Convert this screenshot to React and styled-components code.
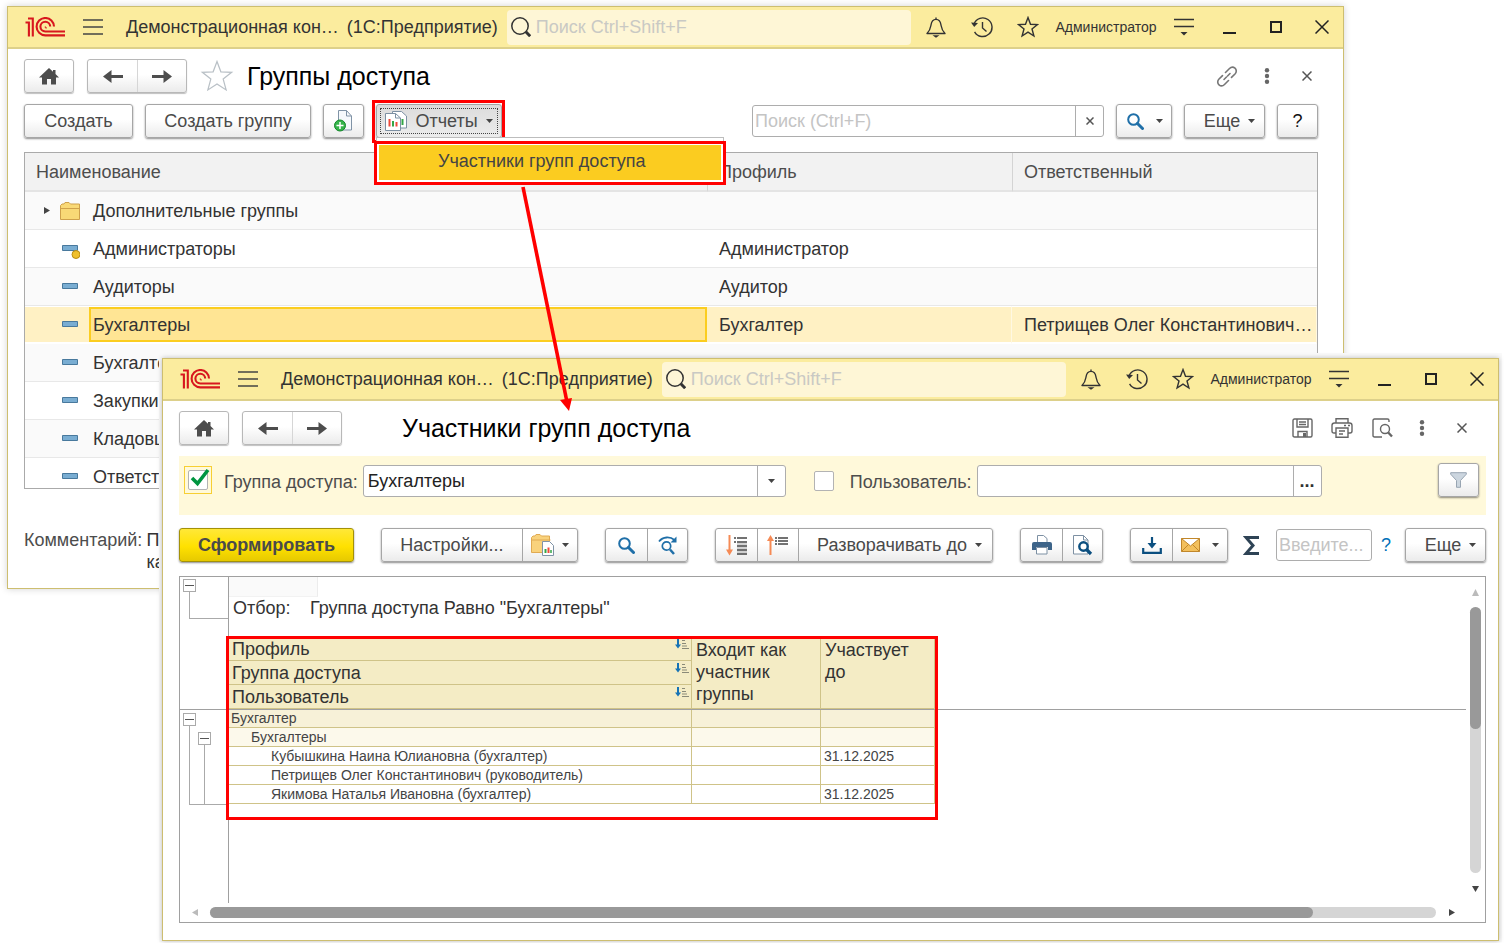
import React, { useState } from 'react'
import styled, { createGlobalStyle, css } from 'styled-components'

const GlobalStyle = createGlobalStyle`
  * {
    box-sizing: border-box;
  }
  body {
    margin: 0;
    background: #fff;
    color: #333;
    font-family: 'Liberation Sans', Arial, sans-serif;
    font-size: 18px;
    line-height: 22px;
  }
  button, input, select {
    margin: 0;
    padding: 0;
    font: inherit;
    color: inherit;
  }
  svg {
    display: block;
    flex: none;
  }
`

/* ---------- desktop and windows ---------- */

const Desktop = styled.div`
  position: relative;
  height: 100vh;
  overflow: hidden;
`

const Window = styled.section`
  position: absolute;
  display: flex;
  flex-direction: column;
  background: #fff;
  border: 1px solid #cdbe70;
  overflow: visible;
`

const ListWindow = styled(Window)`
  inset: 6px 160px 354px 7px;
  box-shadow: 0 0 7px rgba(0, 0, 0, 0.18);
`

const ReportWindow = styled(Window)`
  inset: 358px 5px 2px 162px;
  box-shadow: 0 0 5px rgba(0, 0, 0, 0.25), 0 -2px 0 3px #fafafa;
`

const TitleBar = styled.header`
  display: flex;
  align-items: center;
  height: 42px;
  padding-left: 17px;
  background: #fbec9e;
  border-bottom: 2px solid #ddd08a;
  flex: none;
`

const AppName = styled.span`
  margin-left: 8px;
  white-space: nowrap;
`

const MenuButton = styled.button`
  margin: 0 15px 0 18px;
  border: none;
  background: none;
`

const GlobalSearch = styled.label`
  display: flex;
  flex: 1;
  align-items: center;
  gap: 5px;
  height: 35px;
  min-width: 0;
  margin: 0 4px 0 9px;
  padding-left: 4px;
  border-radius: 4px;
  background: #fef6d6;

  input {
    flex: 1;
    min-width: 0;
    border: none;
    background: none;
    outline: none;
  }
  input::placeholder {
    color: #c9c9c4;
    opacity: 1;
  }
`

const TitleActions = styled.div`
  display: flex;
  align-items: center;
  gap: 4px;
`

const TitleButton = styled.button`
  display: flex;
  align-items: center;
  justify-content: center;
  width: 42px;
  height: 38px;
  border: none;
  background: none;
`

const UserButton = styled(TitleButton)`
  width: 106px;
  font-size: 14px;
`

/* ---------- controls ---------- */

const raised = css`
  border: 1px solid #a6a6a6;
  background: linear-gradient(#fff 45%, #ebebeb);
  box-shadow: 0 1px 2px rgba(0, 0, 0, 0.45);
`

const Button = styled.button`
  display: flex;
  align-items: center;
  justify-content: center;
  gap: ${(p) => p.$gap || 8}px;
  width: ${(p) => p.$width}px;
  height: 34px;
  padding-left: ${(p) => p.$indent || 0}px;
  flex: none;
  white-space: nowrap;
  border-radius: 3px;
  color: #4a4a4a;
  ${raised}
`

const HelpButton = styled(Button)`
  color: #111;
`

const PressedButton = styled(Button)`
  background: linear-gradient(#dcdcdc, #ececec);
  outline: 1px dotted #444;
  outline-offset: -5px;
`

const PrimaryButton = styled(Button)`
  font-weight: bold;
  border-color: #a39108;
  background: linear-gradient(#ffe838, #ffe100 55%, #e6c900);
`

const ButtonGroup = styled.div`
  display: flex;
  flex: none;
  border-radius: 3px;
  ${raised}

  ${Button} {
    height: 32px;
    border: none;
    background: none;
    box-shadow: none;
  }
  ${Button} + ${Button} {
    border-left: 1px solid #a6a6a6;
    border-radius: 0;
  }
`

const NavRow = styled.div`
  display: flex;
  align-items: center;
  height: 34px;
  margin-top: 10px;
  flex: none;
`

const NavGroup = styled(ButtonGroup)`
  margin-left: 13px;
  box-shadow: 0 1px 1px rgba(0, 0, 0, 0.25);
  border-color: #b8b8b8;

  ${Button} + ${Button} {
    border-left-color: #d6d6d6;
  }
`

const HomeButton = styled(Button)`
  border-color: #b8b8b8;
  box-shadow: 0 1px 1px rgba(0, 0, 0, 0.25);
`

const FavoriteSlot = styled.div`
  display: flex;
  align-items: center;
  justify-content: center;
  width: 60px;

  button {
    border: none;
    background: none;
  }
`

const PageTitle = styled.h1`
  flex: 1;
  margin: 0;
  color: #000;
  font-size: 25px;
  font-weight: normal;
  line-height: 30px;
  white-space: nowrap;
`

const PageActions = styled.div`
  display: flex;
  margin-right: ${(p) => p.$after}px;

  button {
    display: flex;
    align-items: center;
    justify-content: center;
    width: 40px;
    height: 34px;
    border: none;
    background: none;
  }
`

const Toolbar = styled.div`
  display: flex;
  align-items: center;
  gap: 12px;
  margin-top: 11px;
  flex: none;
`

const Spacer = styled.div`
  flex: 1;
`

const Field = styled.div`
  position: relative;
  display: flex;
  width: ${(p) => p.$width}px;
  height: 32px;
  border: 1px solid #adadad;
  border-radius: 3px;
  background: #fff;
  overflow: hidden;

  input, select {
    flex: 1;
    min-width: 0;
    padding: 0 4px 0 2px;
    border: none;
    outline: none;
    background: none;
    appearance: none;
  }
  select {
    padding-left: 4px;
    color: #222;
  }
  input::placeholder {
    color: #c4c4c4;
    opacity: 1;
  }
`

const FieldButton = styled.button`
  display: flex;
  align-items: center;
  justify-content: center;
  width: 28px;
  border: none;
  border-left: 1px solid #adadad;
  background: none;
  font-weight: bold;
`

const DropMark = styled.span`
  position: absolute;
  right: 0;
  top: 0;
  bottom: 0;
  display: flex;
  align-items: center;
  justify-content: center;
  width: 28px;
  border-left: 1px solid #adadad;
  pointer-events: none;
`

/* ---------- reports menu ---------- */

const ReportsMenu = styled.div`
  position: relative;

  &::after {
    content: '';
    position: absolute;
    z-index: 2;
    inset: -4px -3px -5px -4px;
    border: 3px solid #f00;
    pointer-events: none;
  }
`

const Popup = styled.div`
  position: absolute;
  z-index: 3;
  top: 33px;
  left: 0;
  width: 348px;
  padding: 7px 2px 2px;
  border: 1px solid #bdbdbd;
  background: #fff;

  &::after {
    content: '';
    position: absolute;
    inset: 3px -3px -3px;
    border: 3px solid #f00;
    pointer-events: none;
  }
`

const PopupItem = styled.button`
  display: block;
  width: 100%;
  height: 35px;
  padding: 0 0 4px 59px;
  border: none;
  background: #fbcc20;
  color: #444;
  text-align: left;
`

/* ---------- list window ---------- */

const ListBody = styled.div`
  display: flex;
  flex: 1;
  flex-direction: column;
  min-height: 0;
  padding: 0 25px 15px 16px;
`

const TableBox = styled.div`
  flex: 1;
  min-height: 0;
  margin-top: 14px;
  border: 1px solid #aaa;
  overflow: hidden;
`

const GroupTable = styled.table`
  width: 100%;
  border-collapse: separate;
  border-spacing: 0;
  table-layout: fixed;

  th {
    height: 39px;
    padding: 0 11px;
    border-bottom: 2px solid #e4e4e4;
    background: #f2f2f2;
    color: #4d4d4d;
    font-weight: normal;
    text-align: left;
  }
  th + th {
    border-left: 1px solid #d4d4d4;
  }
`

const GroupRow = styled.tr`
  td {
    height: 38px;
    padding: 0 0 0 12px;
    border-bottom: 1px solid #e8e8e8;
    background: ${(p) => (p.$striped ? '#fafafa' : '#fff')};
    white-space: nowrap;
  }
  td:first-child {
    padding: 0;
  }
  ${(p) =>
    p.$selected &&
    css`
      td {
        background: #fff1c4;
        border-top: 1px solid #fff;
        border-bottom: 2px solid #fff;
      }
      td + td {
        border-right: 1px solid #fff8e2;
      }
    `}
`

const NameCell = styled.div`
  display: flex;
  align-items: center;
  height: 35px;
  padding-left: 18px;
`

const NodeIcon = styled.span`
  display: flex;
  align-items: center;
  width: 20px;
  height: 20px;
  margin-left: ${(p) => (p.$expandable ? 10 : 17)}px;
`

const NodeName = styled.span`
  display: flex;
  flex: 1;
  align-items: center;
  height: 35px;
  margin-left: 9px;
  padding-left: 2px;
  border: 2px solid ${(p) => (p.$selected ? '#fbcd20' : 'transparent')};
  background: ${(p) => (p.$selected ? '#ffe594' : 'none')};
`

const Comment = styled.dl`
  display: flex;
  gap: 4px;
  margin: 40px 0 0;
  height: 44px;
  flex: none;

  dt {
    color: #4d4d4d;
  }
  dd {
    margin: 0;
    white-space: pre-line;
  }
`

/* ---------- report window ---------- */

const ReportBody = styled.div`
  display: flex;
  flex: 1;
  flex-direction: column;
  min-height: 0;
  padding: 0 12px 17px 16px;
`

const FilterPanel = styled.div`
  display: flex;
  align-items: flex-start;
  height: 59px;
  margin-top: 11px;
  padding: 9px 7px 0 5px;
  background: #fff9da;
  flex: none;

  label {
    margin: 0 5px 0 12px;
    padding-top: 6px;
    color: #4d4d4d;
    white-space: nowrap;
  }
  ${Button} {
    margin: -2px 0 0 auto;
  }
`

const CheckFrame = styled.span`
  position: relative;
  display: flex;
  padding: 3px;
  margin-top: ${(p) => (p.$focused ? 1 : 2)}px;
  margin-left: ${(p) => p.$indent || 0}px;
  border: 1px solid ${(p) => (p.$focused ? '#f7cf33' : 'transparent')};

  input {
    width: 20px;
    height: 20px;
    border: 1px solid #b3b3b3;
    border-radius: 2px;
    background: #fff;
    appearance: none;
  }
  svg {
    position: absolute;
    left: 5px;
    top: 1px;
    pointer-events: none;
  }
`

const ReportToolbar = styled(Toolbar)`
  gap: 27px;
  margin-top: 13px;
`

const TotalsGroup = styled.div`
  display: flex;
  flex: 1;
  align-items: center;
  gap: 9px;
  margin: 0 -14px 0 -12px;
`

const PlainButton = styled.button`
  border: none;
  background: none;
  color: #0070b8;
  margin-right: ${(p) => p.$after || 0}px;
`

const ReportArea = styled.div`
  display: grid;
  flex: 1;
  grid-template-columns: minmax(0, 1fr) 19px;
  grid-template-rows: minmax(0, 1fr) 19px;
  min-height: 0;
  margin-top: 14px;
  border: 1px solid #a0a0a0;
`

const Canvas = styled.div`
  position: relative;
  display: flex;
  min-height: 0;
`

const FreezeLine = styled.div`
  position: absolute;
  top: 132px;
  left: 0;
  right: 0;
  height: 1px;
  background: #a0a0a0;
`

const Gutter = styled.div`
  width: 49px;
  padding: 2px 0 0 3px;
  border-right: 1px solid #a0a0a0;
  flex: none;
`

const GutterPane = styled.div`
  height: 134px;
`

const OutlineToggle = styled.button`
  display: flex;
  align-items: center;
  justify-content: center;
  width: 13px;
  height: 13px;
  border: 1px solid #aaa;
  background: #fff;

  &::before {
    content: '';
    width: 9px;
    height: 1px;
    background: #555;
  }
`

const OutlineLine = styled.div`
  height: ${(p) => p.$height}px;
  margin-left: 6px;
  padding: ${(p) => p.$inset || '0'};
  border-left: 1px solid #aaa;
  border-bottom: ${(p) => (p.$open ? 'none' : '1px solid #aaa')};
`

const Sheet = styled.div`
  flex: 1;
  min-width: 0;
`

const CurrentCell = styled.div`
  width: 89px;
  height: 20px;
  border-right: 1px solid #ececec;
  border-bottom: 1px solid #f2f2f2;
  background: #fafafa;
`

const Selection = styled.div`
  display: grid;
  grid-template-columns: 77px 1fr;
  padding: 0 0 18px 4px;
`

const ReportFrame = styled.div`
  position: relative;
  width: 706px;

  &::after {
    content: '';
    position: absolute;
    z-index: 1;
    inset: -1px -3px -16px -3px;
    border: 3px solid #f00;
    pointer-events: none;
  }
`

const ReportTable = styled.table`
  width: 100%;
  border-collapse: separate;
  border-spacing: 0;
  table-layout: fixed;
  line-height: 17px;

  th, td {
    padding: 1px 3px 0;
    border-right: 1px solid #cfc388;
    border-bottom: 1px solid #cfc388;
    text-align: left;
    white-space: nowrap;
  }
  th {
    height: 24px;
    padding: 2px 3px 0;
    background: #f4ecc5;
    font-weight: normal;
    line-height: 21px;
  }
  th[rowspan] {
    padding-left: 4px;
    white-space: normal;
    vertical-align: top;
    line-height: 22px;
  }
`

const HeadLabel = styled.div`
  display: flex;
  align-items: flex-start;
  justify-content: space-between;
  margin-right: -2px;
`

const levelColors = ['#f7f1d8', '#fcf9eb', '#fff']

const ReportRow = styled.tr`
  td {
    height: 19px;
    background: ${(p) => levelColors[p.$level]};
    color: #444;
    font-size: 14px;
  }
  td:first-child {
    padding-left: ${(p) => 2 + p.$level * 20}px;
  }
`

const ScrollBar = styled.div`
  display: flex;
  flex-direction: ${(p) => (p.$vertical ? 'column' : 'row')};
  align-items: center;
`

const ScrollArrow = styled.button`
  display: flex;
  align-items: center;
  justify-content: center;
  width: ${(p) => (p.$vertical ? 19 : 30)}px;
  height: ${(p) => (p.$vertical ? 30 : 19)}px;
  border: none;
  background: none;
  flex: none;
`

const ScrollTrack = styled.div`
  flex: 1;
  width: ${(p) => (p.$vertical ? '11px' : 'auto')};
  height: ${(p) => (p.$vertical ? 'auto' : '11px')};
  border-radius: 6px;
  background: #d5d5d5;
`

const ScrollThumb = styled.div`
  width: ${(p) => (p.$vertical ? '100%' : '90%')};
  height: ${(p) => (p.$vertical ? '46%' : '100%')};
  border-radius: 6px;
  background: #999;
`

const Pointer = styled.svg`
  position: absolute;
  left: 516px;
  top: 184px;
  pointer-events: none;
`

/* ---------- icons ---------- */

const Logo = () => (
  <svg width="40" height="20" viewBox="0 0 40 20" fill="none" stroke="#d8171e" strokeWidth="2.1">
    <path d="M0.5 5.500h3.400V19.500M3 1.500h4.800V19.500" />
    <path d="M29 9.600a8.700 8.700 0 1 0-8.700 8.800H40" />
    <path d="M25.200 9.600a4.900 4.900 0 1 0-4.900 4.900H40" />
    <path d="M20.300 9.400v1.500h1.600" strokeWidth="1" />
  </svg>
)

const Lines = () => (
  <svg width="20" height="16" viewBox="0 0 20 16" stroke="#444" strokeWidth="1.4">
    <path d="M0 1h20M0 8h20M0 15h20" />
  </svg>
)

const SearchIcon = () => (
  <svg width="20" height="20" viewBox="0 0 20 20" fill="none" stroke="#333">
    <circle cx="9" cy="9" r="8.2" strokeWidth="1.5" />
    <path d="M14.8 14.8l4.4 4.4" strokeWidth="3" />
  </svg>
)

const BellIcon = () => (
  <svg width="20" height="21" viewBox="0 0 20 21" fill="none" stroke="#333" strokeWidth="1.4" strokeLinejoin="round">
    <path d="M10 0.6v1.600M1 16.500c3.200-3 3.400-5 4-8.500C5.500 4.700 7 2.400 10 2.400s4.500 2.300 5 5.600c.6 3.500.8 5.500 4 8.500z" />
    <path d="M6.500 18.300h7L10 20.800z" fill="#333" stroke="none" />
  </svg>
)

const HistoryIcon = () => (
  <svg width="22" height="21" viewBox="0 0 22 21" fill="none" stroke="#333" strokeWidth="1.4">
    <path d="M3 7A9.300 9.300 0 1 1 3.600 14.800" />
    <path d="M11.500 5v6l4 3.500" />
    <path d="M0 5.500l7 .5-3.800 4z" fill="#333" stroke="none" />
  </svg>
)

const StarIcon = ({ size = 22, color = '#333', stroke = 1.4 }) => (
  <svg width={size} height={size} viewBox="0 0 22 22" fill="none" stroke={color} strokeWidth={stroke}>
    <path d="M11 1.600l2.500 6.700 7 .3-5.500 4.400 1.900 7L11 16.100 5.100 20l1.900-7L1.500 8.600l7-.3z" />
  </svg>
)

const ServiceIcon = () => (
  <svg width="20" height="18" viewBox="0 0 20 18" stroke="#333" strokeWidth="1.400">
    <path d="M0 1.500h20M0 8.500h20" />
    <path d="M6.500 14h7L10 17.500z" fill="#333" stroke="none" />
  </svg>
)

const MinimizeIcon = () => (
  <svg width="14" height="14" viewBox="0 0 14 14">
    <path d="M0 12h13v2H0z" fill="#222" />
  </svg>
)

const MaximizeIcon = () => (
  <svg width="12" height="12" viewBox="0 0 12 12">
    <path d="M1 1h10v10H1z" fill="none" stroke="#222" strokeWidth="2" />
  </svg>
)

const CrossIcon = ({ size = 10, color = '#555' }) => (
  <svg width={size} height={size} viewBox={`0 0 ${size} ${size}`} stroke={color} strokeWidth="1.500">
    <path d={`M.5 .5L${size - 0.5} ${size - 0.5}M${size - 0.5} .5L.5 ${size - 0.5}`} />
  </svg>
)

const HomeIcon = () => (
  <svg width="20" height="17" viewBox="0 0 20 17" fill="#4d4d4d">
    <path d="M10 0L0 9.500h3V16.500h5V11h4v5.500h5V9.500h3L16.500 6V2h-2.500v1.800z" />
  </svg>
)

const ArrowIcon = ({ right }) => (
  <svg width="20" height="13" viewBox="0 0 20 13" fill="#4d4d4d">
    <path d={right ? 'M20 6.500L11.500 0v5H0v3h11.500v5z' : 'M0 6.500L8.500 0v5H20v3H8.500v5z'} />
  </svg>
)

const LinkIcon = () => (
  <svg width="22" height="21" viewBox="0 0 22 21" fill="none" stroke="#777" strokeWidth="1.600" strokeLinecap="round">
    <path d="M9.500 6.500l4-4c1.600-1.600 3.900-1.700 5.500-.3s1.700 3.900.2 5.500l-3.700 3.700" />
    <path d="M12.500 14.500l-4 4c-1.600 1.600-3.900 1.700-5.500.3s-1.700-3.900-.2-5.500l3.700-3.700" />
    <path d="M8 13.500l6-6" strokeDasharray="3.500 1.500" />
  </svg>
)

const DotsIcon = () => (
  <svg width="6" height="16" viewBox="0 0 6 16" fill="#666">
    <circle cx="3" cy="2.300" r="2.200" />
    <circle cx="3" cy="8" r="2.200" />
    <circle cx="3" cy="13.700" r="2.200" />
  </svg>
)

const Caret = ({ color = '#444' }) => (
  <svg width="7" height="4" viewBox="0 0 7 4">
    <path d="M0 0h7L3.500 4z" fill={color} />
  </svg>
)

const CopyIcon = () => (
  <svg width="19" height="22" viewBox="0 0 19 22">
    <path d="M4.500 .5h8l5 5.500v14h-13z" fill="#f6f9fc" stroke="#8093a6" />
    <path d="M12.500 .5V6h5" fill="none" stroke="#8093a6" />
    <circle cx="6" cy="15.500" r="5.500" fill="#35b44a" stroke="#16882c" />
    <path d="M6 12v7M2.500 15.500h7" stroke="#fff" strokeWidth="1.500" />
  </svg>
)

const ReportsIcon = () => (
  <svg width="22" height="20" viewBox="0 0 22 20">
    <path d="M7.500 .5h9l5 4.500v12h-14z" fill="#fff" stroke="#7d90a3" />
    <path d="M17.500 8v6" stroke="#35a646" strokeWidth="2" />
    <path d="M.5 2.500h10l5 4.500v12.500H.5z" fill="#fff" stroke="#7d90a3" />
    <path d="M10.500 2.500V7h5" fill="none" stroke="#7d90a3" />
    <path d="M4.500 8v7.500M11.500 11v4.500" stroke="#ef4a3a" strokeWidth="2" />
    <path d="M8 10v5.500" stroke="#35a646" strokeWidth="2" />
  </svg>
)

const FindIcon = () => (
  <svg width="17" height="17" viewBox="0 0 17 17" fill="none" stroke="#1f6fa8">
    <circle cx="6.500" cy="6.500" r="5.300" strokeWidth="2" />
    <path d="M10.500 10.500l5 5" strokeWidth="3" strokeLinecap="round" />
  </svg>
)

const FindNextIcon = () => (
  <svg width="20" height="19" viewBox="0 0 20 19" fill="none" stroke="#1f6fa8">
    <path d="M1 5.500C5 .5 12 .3 16.500 4" strokeWidth="1.800" />
    <path d="M18.500 .5v6h-6z" fill="#1f6fa8" stroke="none" />
    <circle cx="8.500" cy="10" r="4.200" strokeWidth="1.700" />
    <path d="M12 13.500l4 4.500" strokeWidth="2.500" />
  </svg>
)

const FolderIcon = () => (
  <svg width="20" height="18" viewBox="0 0 20 18">
    <path d="M.5 17.500V3.500L2 2h2l1-1.500h4L10.500 2h9v15.500z" fill="#f9d976" stroke="#cfa14b" />
    <path d="M.5 6.500h19" stroke="#cfa14b" />
  </svg>
)

const ItemIcon = ({ predefined }) => (
  <svg width="20" height="20" viewBox="0 0 20 20">
    <path d="M2.500 6.500h15v5h-15z" fill="#79add2" stroke="#48799d" />
    {predefined && <circle cx="16" cy="15.500" r="4" fill="#f0c02c" stroke="#b98c12" />}
  </svg>
)

const SaveIcon = () => (
  <svg width="21" height="20" viewBox="0 0 21 20" fill="none" stroke="#666" strokeWidth="1.400">
    <path d="M1 2.500Q1 1 2.500 1h16Q20 1 20 2.500v15q0 1.500-1.500 1.500h-16Q1 19 1 17.500z" />
    <path d="M5 1v8h11V1M7 4h7M7 6.500h7M6 19v-5.500h9V19" />
    <path d="M11 15h3v4h-3z" fill="#666" stroke="none" />
  </svg>
)

const PrintOutlineIcon = () => (
  <svg width="22" height="20" viewBox="0 0 22 20" fill="none" stroke="#666" strokeWidth="1.400">
    <path d="M5 5V.7h12V5M5 15H3q-2 0-2-2V7.500Q1 5 3.500 5h15Q21 5 21 7.500V13q0 2-2 2h-2" />
    <path d="M5 10h12v9.300H5zM8 13h6M8 16h4M13 7.500h2M17 7.500h2" />
  </svg>
)

const PreviewOutlineIcon = () => (
  <svg width="21" height="20" viewBox="0 0 21 20" fill="none" stroke="#666" strokeWidth="1.400">
    <path d="M10 19H2.500Q1 19 1 17.500v-15Q1 1 2.500 1h13Q17 1 17 2.500V4" />
    <circle cx="13" cy="11" r="4.500" />
    <path d="M16.200 14.500l3.800 4" strokeWidth="2.400" />
  </svg>
)

const CheckIcon = () => (
  <svg width="20" height="20" viewBox="0 0 20 20">
    <path d="M2 10l5.500 5.500L18 2" fill="none" stroke="#009540" strokeWidth="3.600" />
  </svg>
)

const FunnelIcon = () => (
  <svg width="17" height="16" viewBox="0 0 17 16">
    <path d="M.7 .7h15.600v1.500L10.500 8.500v6.800h-4V8.500L.7 2.200z" fill="#ccd6df" stroke="#98a5b2" />
  </svg>
)

const ReportFolderIcon = () => (
  <svg width="23" height="22" viewBox="0 0 23 22">
    <path d="M.5 18.500V3.500L2 2h2l1-1.500h4L10.500 2h8v16.500z" fill="#f9d27c" stroke="#e0aa52" />
    <path d="M.5 6h19" stroke="#e0aa52" />
    <path d="M11.500 7.500h7l4 4v10h-11z" fill="#fff" stroke="#8093a6" />
    <path d="M14.500 15v4" stroke="#35a646" strokeWidth="2" />
    <path d="M17.500 13.500v5.500" stroke="#ef4a3a" strokeWidth="2" />
    <path d="M20 16v3" stroke="#35a646" strokeWidth="1.500" />
  </svg>
)

const ExpandIcon = () => (
  <svg width="22" height="21" viewBox="0 0 22 21">
    <path d="M3.500 0v16" stroke="#f58a55" strokeWidth="2" />
    <path d="M0 14.500h7L3.500 20.500z" fill="#f58a55" />
    <path d="M8 3h2M11 3h10M8 7h2M11 7h10M11 11h10M11 15h10M11 19h10" stroke="#444" strokeWidth="1.600" />
    <path d="M11 9h10M11 13h10M11 17h10" stroke="#aaa" strokeWidth="1.200" />
  </svg>
)

const CollapseIcon = () => (
  <svg width="22" height="21" viewBox="0 0 22 21">
    <path d="M3.500 5v15" stroke="#f58a55" strokeWidth="2" />
    <path d="M0 6h7L3.500 0z" fill="#f58a55" />
    <path d="M8 3h2M11 3h10M8 6h2M11 6h10M8 9h2M11 9h10" stroke="#444" strokeWidth="1.500" />
  </svg>
)

const PrintIcon = () => (
  <svg width="20" height="20" viewBox="0 0 20 20">
    <path d="M5.500 8V.5h6l3.500 3V8" fill="#fff" stroke="#7d90a3" />
    <path d="M2 7h16q2 0 2 2v6h-4v-3H4v3H0V9q0-2 2-2z" fill="#3d6489" />
    <path d="M4.500 12.500h10.500v6.500H4.500z" fill="#fff" stroke="#7d90a3" />
  </svg>
)

const PreviewIcon = () => (
  <svg width="20" height="21" viewBox="0 0 20 21" fill="none">
    <path d="M.5 .5h10l4.500 4.500v14H.5z" fill="#fff" stroke="#7d90a3" />
    <path d="M10.500 .5V5H15" stroke="#7d90a3" />
    <circle cx="10.500" cy="11.500" r="4.200" fill="#fff" stroke="#0b4f80" strokeWidth="2.400" />
    <path d="M13.500 14.500l4.500 4.500" stroke="#0b4f80" strokeWidth="3.200" />
  </svg>
)

const DownloadIcon = () => (
  <svg width="20" height="17" viewBox="0 0 20 17" fill="none" stroke="#0b4f80" strokeWidth="2.200">
    <path d="M10 0v8" />
    <path d="M5.500 6h9L10 11.500z" fill="#0b4f80" stroke="none" />
    <path d="M1.200 11v4.800h17.600V11" />
  </svg>
)

const MailIcon = () => (
  <svg width="19" height="14" viewBox="0 0 19 14" fill="#f3c05c" stroke="#c1872b">
    <path d="M.5 .5h18v13H.5zM.5 .5l9 7.500 9-7.500M.5 13.500l7-7M18.500 13.500l-7-7" />
  </svg>
)

const SigmaIcon = () => (
  <svg width="17" height="19" viewBox="0 0 17 19" fill="none" stroke="#2e4355" strokeWidth="3">
    <path d="M16 1.500H3l7 8-7 8h13" strokeLinejoin="miter" />
  </svg>
)

const SortIcon = () => (
  <svg width="15" height="11" viewBox="0 0 15 11">
    <path d="M3 0v7" stroke="#1673b5" strokeWidth="2" />
    <path d="M0 5.500h6L3 9.500z" fill="#1673b5" />
    <path d="M7 1.500h3M7 4.500h4M7 7h5M7 9.500h7" stroke="#8a8a78" />
  </svg>
)

const Triangle = ({ points, color = '#444' }) => (
  <svg width="7" height="7" viewBox="0 0 7 7">
    <polygon points={points} fill={color} />
  </svg>
)

/* ---------- data ---------- */

const groups = [
  { name: 'Дополнительные группы', folder: true },
  { name: 'Администраторы', profile: 'Администратор', predefined: true },
  { name: 'Аудиторы', profile: 'Аудитор' },
  { name: 'Бухгалтеры', profile: 'Бухгалтер', owner: 'Петрищев Олег Константинович…' },
  { name: 'Бухгалте' },
  { name: 'Закупки' },
  { name: 'Кладовщ' },
  { name: 'Ответст' },
]

const reportHead = ['Профиль', 'Группа доступа', 'Пользователь']

const reportRows = [
  { level: 0, name: 'Бухгалтер' },
  { level: 1, name: 'Бухгалтеры' },
  { level: 2, name: 'Кубышкина Наина Юлиановна (бухгалтер)', until: '31.12.2025' },
  { level: 2, name: 'Петрищев Олег Константинович (руководитель)' },
  { level: 2, name: 'Якимова Наталья Ивановна (бухгалтер)', until: '31.12.2025' },
]

/* ---------- parts ---------- */

const AppTitleBar = () => (
  <TitleBar>
    <Logo />
    <MenuButton aria-label="Меню">
      <Lines />
    </MenuButton>
    <AppName>Демонстрационная кон…</AppName>
    <AppName>(1С:Предприятие)</AppName>
    <GlobalSearch>
      <SearchIcon />
      <input type="text" placeholder="Поиск Ctrl+Shift+F" />
    </GlobalSearch>
    <TitleActions>
      <TitleButton aria-label="Уведомления"><BellIcon /></TitleButton>
      <TitleButton aria-label="История"><HistoryIcon /></TitleButton>
      <TitleButton aria-label="Избранное"><StarIcon /></TitleButton>
      <UserButton>Администратор</UserButton>
      <TitleButton aria-label="Сервис"><ServiceIcon /></TitleButton>
      <TitleButton aria-label="Свернуть"><MinimizeIcon /></TitleButton>
      <TitleButton aria-label="Развернуть"><MaximizeIcon /></TitleButton>
      <TitleButton aria-label="Закрыть"><CrossIcon size={14} color="#222" /></TitleButton>
    </TitleActions>
  </TitleBar>
)

const Navigation = () => (
  <>
    <HomeButton $width={50} aria-label="Начальная страница">
      <HomeIcon />
    </HomeButton>
    <NavGroup>
      <Button $width={49} aria-label="Назад"><ArrowIcon /></Button>
      <Button $width={49} aria-label="Вперед"><ArrowIcon right /></Button>
    </NavGroup>
  </>
)

const GroupList = () => {
  const [selected, setSelected] = useState(3)

  return (
    <TableBox>
      <GroupTable>
        <colgroup>
          <col />
          <col width="305" />
          <col width="305" />
        </colgroup>
        <thead>
          <tr>
            <th>Наименование</th>
            <th>Профиль</th>
            <th>Ответственный</th>
          </tr>
        </thead>
        <tbody>
          {groups.map((group, i) => (
            <GroupRow
              key={group.name}
              $striped={i % 2 === 0}
              $selected={i === selected}
              onClick={() => setSelected(i)}
            >
              <td>
                <NameCell>
                  {group.folder && <Triangle points="1,0 7,3.5 1,7" />}
                  <NodeIcon $expandable={group.folder}>
                    {group.folder ? <FolderIcon /> : <ItemIcon predefined={group.predefined} />}
                  </NodeIcon>
                  <NodeName $selected={i === selected}>{group.name}</NodeName>
                </NameCell>
              </td>
              <td>{group.profile}</td>
              <td>{group.owner}</td>
            </GroupRow>
          ))}
        </tbody>
      </GroupTable>
    </TableBox>
  )
}

const AccessGroups = () => (
  <ListWindow>
    <AppTitleBar />
    <ListBody>
      <NavRow>
        <Navigation />
        <FavoriteSlot>
          <button aria-label="В избранное">
            <StarIcon size={34} color="#b9c0c6" stroke={0.8} />
          </button>
        </FavoriteSlot>
        <PageTitle>Группы доступа</PageTitle>
        <PageActions $after={-9}>
          <button aria-label="Ссылка"><LinkIcon /></button>
          <button aria-label="Действия"><DotsIcon /></button>
          <button aria-label="Закрыть"><CrossIcon /></button>
        </PageActions>
      </NavRow>
      <Toolbar>
        <Button $width={109}>Создать</Button>
        <Button $width={166}>Создать группу</Button>
        <Button $width={41} aria-label="Скопировать"><CopyIcon /></Button>
        <ReportsMenu>
          <PressedButton $width={126}>
            <ReportsIcon />
            Отчеты
            <Caret />
          </PressedButton>
          <Popup>
            <PopupItem>Участники групп доступа</PopupItem>
          </Popup>
        </ReportsMenu>
        <Spacer />
        <Field $width={352}>
          <input type="text" aria-label="Поиск" placeholder="Поиск (Ctrl+F)" />
          <FieldButton aria-label="Очистить"><CrossIcon size={8} /></FieldButton>
        </Field>
        <Button $width={56} $gap={12} $indent={2} aria-label="Найти">
          <FindIcon />
          <Caret />
        </Button>
        <Button $width={81} $indent={10}>
          Еще
          <Caret />
        </Button>
        <HelpButton $width={41}>?</HelpButton>
      </Toolbar>
      <GroupList />
      <Comment>
        <dt>Комментарий:</dt>
        <dd>{'Пр\nка'}</dd>
      </Comment>
    </ListBody>
  </ListWindow>
)

const ReportSheet = () => (
  <ReportArea>
    <Canvas>
      <Gutter>
        <GutterPane>
          <OutlineToggle aria-label="Свернуть отбор" />
          <OutlineLine $height={27} />
        </GutterPane>
        <OutlineToggle aria-label="Свернуть профиль" />
        <OutlineLine $height={79} $inset="6px 0 0 8px">
          <OutlineToggle aria-label="Свернуть группу" />
          <OutlineLine $height={59} $open />
        </OutlineLine>
      </Gutter>
      <Sheet>
        <CurrentCell />
        <Selection>
          <span>Отбор:</span>
          <span>Группа доступа Равно "Бухгалтеры"</span>
        </Selection>
        <ReportFrame>
          <ReportTable>
            <colgroup>
              <col />
              <col width="129" />
              <col width="114" />
            </colgroup>
            <thead>
              {reportHead.map((label, i) => (
                <tr key={label}>
                  <th>
                    <HeadLabel>
                      {label}
                      <SortIcon />
                    </HeadLabel>
                  </th>
                  {i === 0 && <th rowSpan={3}>Входит как участник группы</th>}
                  {i === 0 && <th rowSpan={3}>Участвует до</th>}
                </tr>
              ))}
            </thead>
            <tbody>
              {reportRows.map((row) => (
                <ReportRow key={row.name} $level={row.level}>
                  <td>{row.name}</td>
                  <td />
                  <td>{row.until}</td>
                </ReportRow>
              ))}
            </tbody>
          </ReportTable>
        </ReportFrame>
      </Sheet>
      <FreezeLine />
    </Canvas>
    <ScrollBar $vertical>
      <ScrollArrow $vertical aria-label="Вверх"><Triangle points="3.5,0 7,7 0,7" color="#bbb" /></ScrollArrow>
      <ScrollTrack $vertical><ScrollThumb $vertical /></ScrollTrack>
      <ScrollArrow $vertical aria-label="Вниз"><Triangle points="0,1 7,1 3.5,7" /></ScrollArrow>
    </ScrollBar>
    <ScrollBar>
      <ScrollArrow aria-label="Влево"><Triangle points="6,0 6,7 0,3.5" color="#bbb" /></ScrollArrow>
      <ScrollTrack><ScrollThumb /></ScrollTrack>
      <ScrollArrow aria-label="Вправо"><Triangle points="1,0 1,7 7,3.5" /></ScrollArrow>
    </ScrollBar>
  </ReportArea>
)

const GroupMembersReport = () => {
  const [byGroup, setByGroup] = useState(true)
  const [byUser, setByUser] = useState(false)

  return (
    <ReportWindow>
      <AppTitleBar />
      <ReportBody>
        <NavRow>
          <Navigation />
          <FavoriteSlot />
          <PageTitle>Участники групп доступа</PageTitle>
          <PageActions $after={4}>
            <button aria-label="Сохранить"><SaveIcon /></button>
            <button aria-label="Печать"><PrintOutlineIcon /></button>
            <button aria-label="Просмотр"><PreviewOutlineIcon /></button>
            <button aria-label="Действия"><DotsIcon /></button>
            <button aria-label="Закрыть"><CrossIcon /></button>
          </PageActions>
        </NavRow>
        <FilterPanel>
          <CheckFrame $focused>
            <input
              type="checkbox"
              aria-label="Отбор по группе доступа"
              checked={byGroup}
              onChange={(e) => setByGroup(e.target.checked)}
            />
            {byGroup && <CheckIcon />}
          </CheckFrame>
          <label htmlFor="group">Группа доступа:</label>
          <Field $width={423}>
            <select id="group" defaultValue="Бухгалтеры">
              <option>Бухгалтеры</option>
            </select>
            <DropMark><Caret /></DropMark>
          </Field>
          <CheckFrame $indent={24}>
            <input
              type="checkbox"
              aria-label="Отбор по пользователю"
              checked={byUser}
              onChange={(e) => setByUser(e.target.checked)}
            />
            {byUser && <CheckIcon />}
          </CheckFrame>
          <label htmlFor="user">Пользователь:</label>
          <Field $width={345}>
            <input id="user" type="text" />
            <FieldButton aria-label="Выбрать">...</FieldButton>
          </Field>
          <Button $width={41} aria-label="Фильтр"><FunnelIcon /></Button>
        </FilterPanel>
        <ReportToolbar>
          <PrimaryButton $width={175}>Сформировать</PrimaryButton>
          <ButtonGroup>
            <Button $width={140}>Настройки...</Button>
            <Button $width={55} aria-label="Варианты">
              <ReportFolderIcon />
              <Caret />
            </Button>
          </ButtonGroup>
          <ButtonGroup>
            <Button $width={41} aria-label="Найти"><FindIcon /></Button>
            <Button $width={40} aria-label="Найти далее"><FindNextIcon /></Button>
          </ButtonGroup>
          <ButtonGroup>
            <Button $width={41} aria-label="Развернуть группы"><ExpandIcon /></Button>
            <Button $width={41} aria-label="Свернуть группы"><CollapseIcon /></Button>
            <Button $width={194} $indent={8}>
              Разворачивать до
              <Caret />
            </Button>
          </ButtonGroup>
          <ButtonGroup>
            <Button $width={41} aria-label="Печать"><PrintIcon /></Button>
            <Button $width={40} aria-label="Просмотр"><PreviewIcon /></Button>
          </ButtonGroup>
          <ButtonGroup>
            <Button $width={41} aria-label="Сохранить"><DownloadIcon /></Button>
            <Button $width={55} $gap={12} aria-label="Отправить">
              <MailIcon />
              <Caret />
            </Button>
          </ButtonGroup>
          <TotalsGroup>
            <PlainButton $after={7} aria-label="Сумма"><SigmaIcon /></PlainButton>
            <Field $width={96}>
              <input type="text" aria-label="Сумма ячеек" placeholder="Введите..." />
            </Field>
            <PlainButton>?</PlainButton>
          </TotalsGroup>
          <Button $width={81} $indent={10}>
            Еще
            <Caret />
          </Button>
        </ReportToolbar>
        <ReportSheet />
      </ReportBody>
    </ReportWindow>
  )
}

const App = () => (
  <>
    <GlobalStyle />
    <Desktop>
      <AccessGroups />
      <GroupMembersReport />
      <Pointer width="60" height="230" viewBox="0 0 60 230">
        <path d="M7 3L51 218" stroke="#f00" strokeWidth="3.600" />
        <path d="M53 227L44 216L56 214z" fill="#f00" />
      </Pointer>
    </Desktop>
  </>
)

export default App
